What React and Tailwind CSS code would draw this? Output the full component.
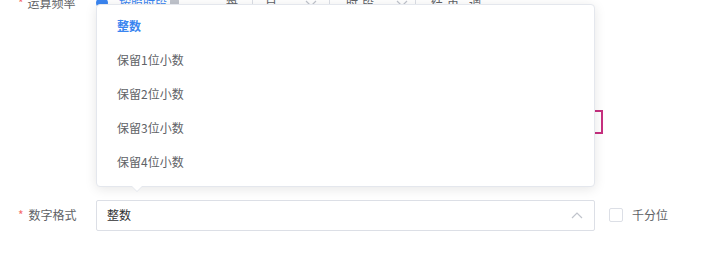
import React from "react";

const font = { fontFamily: '"Noto Sans CJK SC", "Noto Sans", sans-serif' };

function Chevron({ up = false, className = "" }) {
  return (
    <svg width="12" height="7" viewBox="0 0 12 7" className={className}>
      <path
        d={up ? "M1 6 L6 1 L11 6" : "M1 1 L6 6 L11 1"}
        fill="none"
        stroke="#c0c4cc"
        strokeWidth="1.2"
      />
    </svg>
  );
}

export default function App() {
  const items = ["整数", "保留1位小数", "保留2位小数", "保留3位小数", "保留4位小数"];
  return (
    <div className="relative w-[722px] h-[253px] overflow-hidden bg-white text-[12px]" style={font}>
      {/* top row (mostly hidden) */}
      <div className="flex items-center h-[32px] -mt-[13px]">
        <div className="w-[96px] pl-[18px] flex items-center text-[#606266]">
          <span className="text-[#f56c6c] mr-[4px]">*</span>
          <span>运算频率</span>
        </div>
        <div className="w-[12px] h-[12px] rounded-full bg-[#3a85f0]" />
        <span className="ml-[11px] text-[#3a85f0]">按照时段</span>
        <span className="ml-[3px] w-[9px] h-[9px] bg-[#c0c4cc] rounded-[2px]" />
        <span className="ml-[47px] text-[#606266]">每</span>
        <div className="ml-[14px] w-[78px] h-[28px] border border-[#dcdfe6] rounded-[4px] flex items-center justify-between px-[12px] text-[#606266]">
          <span>日</span>
          <Chevron />
        </div>
        <span className="ml-[16px] text-[#606266] tracking-[4px]">时段</span>
        <div className="ml-[10px] w-[28px] h-[28px] border-r border-[#dcdfe6] flex items-center justify-center">
          <Chevron />
        </div>
        <span className="ml-[15px] text-[#606266] tracking-[4px]">结束</span>
        <span className="ml-[6px] text-[#606266]">调</span>
      </div>

      {/* hidden middle row with pink element */}
      <div className="flex mt-[91px] h-[24px]">
        <div className="ml-[560px] w-[43px] h-[24px] border-2 border-[#c7307f] bg-white" />
      </div>

      {/* number format row */}
      <div className="flex items-center mt-[65px] h-[32px]">
        <div className="w-[96px] pl-[18px] flex items-center text-[#606266]">
          <span className="text-[#f56c6c] mr-[5px]">*</span>
          <span>数字格式</span>
        </div>
        <div className="w-[499px] h-[31px] border border-[#dcdfe6] rounded-[2px] flex items-center justify-between pl-[10px] pr-[11px]">
          <span className="text-[#303133]">整数</span>
          <Chevron up />
        </div>
        <div className="ml-[14px] w-[14px] h-[14px] border border-[#dcdfe6] rounded-[2px] bg-white" />
        <span className="ml-[9px] text-[#606266]">千分位</span>
      </div>

      {/* dropdown popup */}
      <div className="absolute left-[96px] top-[4px] w-[499px] h-[183px] bg-white border border-[#e4e7ed] rounded-[4px] shadow-[0_2px_12px_0_rgba(0,0,0,0.1)] pt-[4px]">
        {items.map((t, i) => (
          <div
            key={t}
            className={
              "h-[34px] flex items-center pl-[20px] " +
              (i === 0 ? "text-[#3a85f0] font-bold" : "text-[#606266]")
            }
          >
            {t}
          </div>
        ))}
        <div className="absolute left-[34px] -bottom-[6px] w-0 h-0 border-l-[6px] border-r-[6px] border-t-[6px] border-l-transparent border-r-transparent border-t-[#e4e7ed]" />
        <div className="absolute left-[35px] -bottom-[5px] w-0 h-0 border-l-[5px] border-r-[5px] border-t-[5px] border-l-transparent border-r-transparent border-t-white" />
      </div>
    </div>
  );
}
